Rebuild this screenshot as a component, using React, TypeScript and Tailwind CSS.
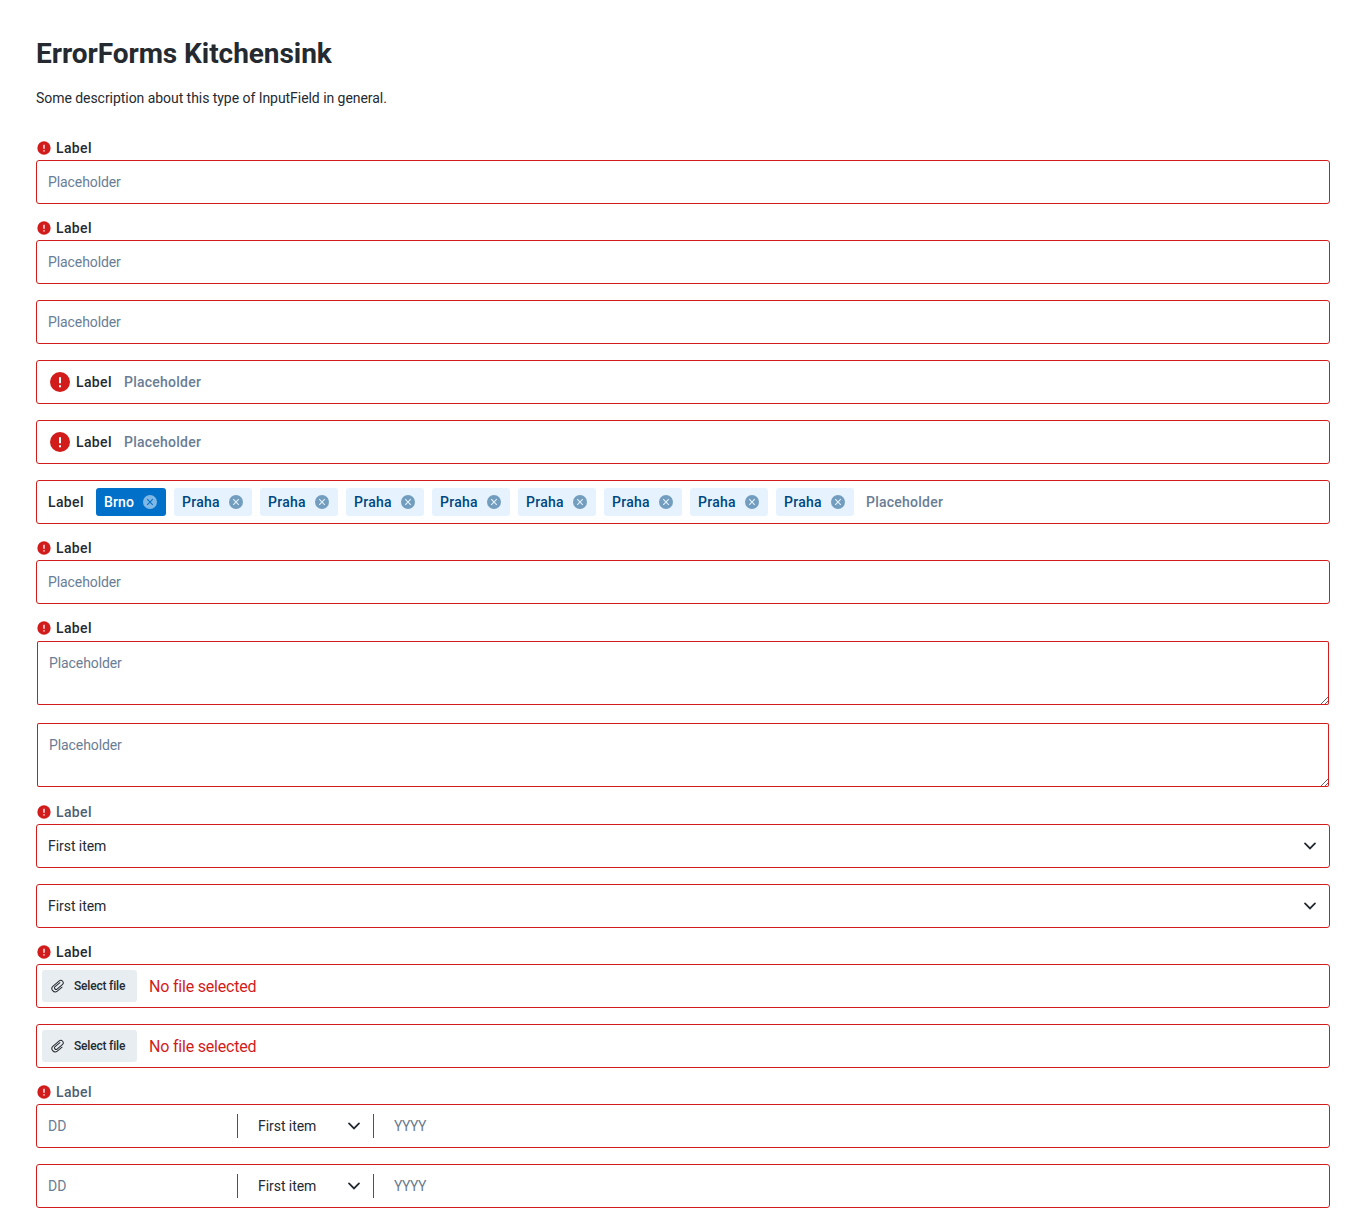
import type { ReactNode } from "react";

function AlertIcon({ className }: { className: string }) {
  return (
    <svg viewBox="0 0 24 24" className={`shrink-0 fill-[#d21c1c] ${className}`}>
      <path
        fillRule="evenodd"
        d="M12 2a10 10 0 1 0 0 20 10 10 0 0 0 0-20Zm-1 5.2h2v6h-2v-6Zm0 8h2v2h-2v-2Z"
      />
    </svg>
  );
}

function CloseIcon({ className }: { className: string }) {
  return (
    <svg viewBox="0 0 24 24" className={`size-4 shrink-0 ${className}`}>
      <path
        fill="currentColor"
        fillRule="evenodd"
        d="M12 1.5a10.5 10.5 0 1 0 0 21 10.5 10.5 0 0 0 0-21Zm4.7 14.1-1.1 1.1-3.6-3.6-3.6 3.6-1.1-1.1 3.6-3.6-3.6-3.6 1.1-1.1 3.6 3.6 3.6-3.6 1.1 1.1-3.6 3.6 3.6 3.6Z"
      />
    </svg>
  );
}

function Chevron() {
  return (
    <svg viewBox="0 0 24 24" className="size-6 shrink-0" fill="none">
      <path d="m7 9.4 5 5.1 5-5.1" stroke="#252a31" strokeWidth="1.8" strokeLinecap="round" />
    </svg>
  );
}

function Clip() {
  return (
    <svg viewBox="0 0 24 24" className="size-4 shrink-0" fill="none">
      <path
        transform="rotate(-40 12 12)"
        d="M15.5 17.2H6.3a4.9 4.9 0 0 1 0-9.8h12a3.6 3.6 0 0 1 0 7.2H8a2.3 2.3 0 0 1 0-4.6h9.4"
        stroke="#252a31"
        strokeWidth="1.5"
        strokeLinecap="round"
      />
    </svg>
  );
}

function Field({ label, muted, children }: { label?: boolean; muted?: boolean; children: ReactNode }) {
  return (
    <div className="flex flex-col">
      {label && (
        <div
          className={`mb-1 flex h-4 items-center gap-1 font-medium ${muted ? "text-[#4f5e71]" : "text-[#252a31]"}`}
        >
          <AlertIcon className="size-4" />
          <span className="tracking-[0.38px]">Label</span>
        </div>
      )}
      {children}
    </div>
  );
}

function Box({ className = "", children }: { className?: string; children: ReactNode }) {
  return (
    <div className={`flex h-11 items-center rounded-[3px] border border-[#d21c1c] bg-white ${className}`}>
      {children}
    </div>
  );
}

const input = "min-w-0 flex-1 bg-transparent outline-none placeholder:text-[#697d95] placeholder:opacity-100";

function TextInput() {
  return (
    <Box className="px-[11px]">
      <input className={`tracking-[-0.09px] ${input}`} placeholder="Placeholder" />
    </Box>
  );
}

function InlineInput() {
  return (
    <Box className="px-[11px] font-medium">
      <AlertIcon className="size-6" />
      <span className="ml-1 w-9 tracking-[0.38px]">Label</span>
      <input className={`ml-3 tracking-[0.24px] ${input}`} placeholder="Placeholder" />
    </Box>
  );
}

function Tag({ active, children }: { active?: boolean; children: ReactNode }) {
  return (
    <span
      className={`flex h-7 items-center justify-between rounded-[3px] px-2 ${
        active ? "w-[70px] bg-[#0070c9] tracking-[0.1px] text-white" : "w-[78px] bg-[#e6f3fe] tracking-[0.28px] text-[#004680]"
      }`}
    >
      {children}
      <CloseIcon className={active ? "text-[#80b8e5]" : "text-[#739dbf]"} />
    </span>
  );
}

function TagInput() {
  return (
    <Box className="px-[11px] font-medium">
      <span className="w-9 tracking-[0.38px]">Label</span>
      <div className="ml-3 flex gap-2">
        <Tag active>Brno</Tag>
        {Array.from({ length: 8 }, (_, i) => (
          <Tag key={i}>Praha</Tag>
        ))}
      </div>
      <input className={`ml-3 tracking-[0.24px] ${input}`} placeholder="Placeholder" />
    </Box>
  );
}

function TextArea() {
  return (
    <textarea
      placeholder="Placeholder"
      className="m-px block h-16 resize-y rounded-[2px] p-3 tracking-[-0.09px] shadow-[inset_0_0_0_1px_#d21c1c] outline-none placeholder:text-[#697d95] placeholder:opacity-100"
    />
  );
}

function Select() {
  return (
    <Box className="justify-between pr-[7px] pl-[11px]">
      <span className="tracking-[-0.05px]">First item</span>
      <Chevron />
    </Box>
  );
}

function FileInput() {
  return (
    <Box className="px-[5px]">
      <button className="flex h-8 w-[95px] items-center gap-2 rounded-[3px] bg-[#e8edf1] pl-2 text-xs font-medium tracking-[-0.19px] whitespace-nowrap">
        <Clip />
        Select file
      </button>
      <span className="mt-0.5 ml-3 text-base tracking-[-0.2px] text-[#d21c1c]">No file selected</span>
    </Box>
  );
}

function DateInput() {
  return (
    <Box className="px-[11px]">
      <div className="flex w-[189px]">
        <input className={input} placeholder="DD" />
      </div>
      <div className="flex h-6 w-[137px] items-center justify-between border-x border-[#d21c1c] pr-[7px] pl-5">
        <span className="tracking-[-0.05px]">First item</span>
        <Chevron />
      </div>
      <input className={`ml-5 tracking-[-0.5px] ${input}`} placeholder="YYYY" />
    </Box>
  );
}

export default function App() {
  return (
    <main className="min-h-[1228px] bg-white px-9 pt-9 pr-5 font-['Roboto',sans-serif] text-sm text-[#252a31]">
      <h1 className="text-[28px] leading-9 font-bold tracking-[-0.05px]">ErrorForms Kitchensink</h1>
      <p className="mt-4 mb-8 leading-5 tracking-[-0.05px]">
        Some description about this type of InputField in general.
      </p>
      <div className="flex flex-col gap-4">
        <Field label><TextInput /></Field>
        <Field label><TextInput /></Field>
        <Field><TextInput /></Field>
        <Field><InlineInput /></Field>
        <Field><InlineInput /></Field>
        <Field><TagInput /></Field>
        <Field label><TextInput /></Field>
        <Field label><TextArea /></Field>
        <Field><TextArea /></Field>
        <Field label muted><Select /></Field>
        <Field><Select /></Field>
        <Field label><FileInput /></Field>
        <Field><FileInput /></Field>
        <Field label muted><DateInput /></Field>
        <Field><DateInput /></Field>
      </div>
    </main>
  );
}
